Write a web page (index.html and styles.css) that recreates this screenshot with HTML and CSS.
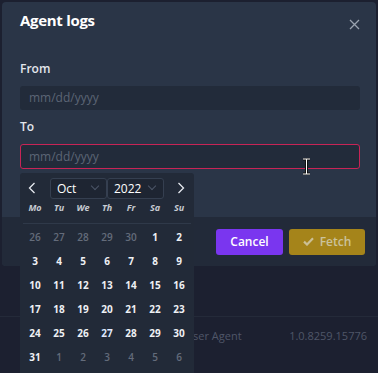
FILE: index.html
```html
<!DOCTYPE html>
<html lang="en">
<head>
    <meta charset="UTF-8">
    <meta name="viewport" content="width=device-width, initial-scale=1.0">
    <title>Agent logs</title>
    <link rel="stylesheet" href="styles.css">
</head>
<body>
    <!-- page behind the dialog -->
    <div class="page">
        <div class="info-row">
            <span class="info-key">User Agent</span>
            <span class="info-val">1.0.8259.15776</span>
        </div>
    </div>

    <!-- dialog -->
    <div class="modal">
        <div class="modal-head">
            <h2>Agent logs</h2>
            <button class="close-btn" aria-label="Close">
                <svg width="11" height="11" viewBox="0 0 11 11"><path d="M1 1L10 10M10 1L1 10" stroke="#9aa3b0" stroke-width="1.3" fill="none"/></svg>
            </button>
        </div>
        <div class="modal-body">
            <label class="field-label">From</label>
            <div class="date-input">mm/dd/yyyy</div>
            <label class="field-label">To</label>
            <div class="date-input focused">mm/dd/yyyy</div>
        </div>
        <div class="modal-foot">
            <button class="btn btn-cancel">Cancel</button>
            <button class="btn btn-fetch">
                <svg width="11" height="9" viewBox="0 0 11 9"><path d="M1 4.6L4 7.5L10 1.2" stroke="#cbbf95" stroke-width="2.2" fill="none"/></svg>
                Fetch
            </button>
        </div>
    </div>

    <!-- date picker popover -->
    <div class="picker">
        <div class="picker-head">
            <span class="nav nav-prev">
                <svg width="8" height="12" viewBox="0 0 8 12"><path d="M6.5 1L1.5 6L6.5 11" stroke="#e6e9ef" stroke-width="1.3" fill="none"/></svg>
            </span>
            <div class="sel sel-month">Oct <i class="caret"></i></div>
            <div class="sel sel-year">2022 <i class="caret"></i></div>
            <span class="nav nav-next">
                <svg width="8" height="12" viewBox="0 0 8 12"><path d="M1.5 1L6.5 6L1.5 11" stroke="#e6e9ef" stroke-width="1.3" fill="none"/></svg>
            </span>
        </div>
        <div class="week-row">
            <span>Mo</span><span>Tu</span><span>We</span><span>Th</span><span>Fr</span><span>Sa</span><span>Su</span>
        </div>
        <div class="days" id="days"></div>
    </div>

    <!-- text cursor -->
    <svg class="ibeam" width="9" height="17" viewBox="0 0 9 17">
        <path d="M1 1H8M4.5 1V16M1 16H8" stroke="#111" stroke-width="3" fill="none"/>
        <path d="M1 1H8M4.5 1V16M1 16H8" stroke="#fff" stroke-width="1" fill="none"/>
    </svg>

    <script>
        // fill the month grid
        const days = document.getElementById('days');
        const cells = [];
        [26, 27, 28, 29, 30].forEach(d => cells.push({ d, muted: true }));
        for (let d = 1; d <= 31; d++) cells.push({ d, muted: false });
        for (let d = 1; d <= 6; d++) cells.push({ d, muted: true });
        cells.forEach(c => {
            const el = document.createElement('span');
            el.className = 'day' + (c.muted ? ' muted' : '') + (!c.muted && c.d === 27 ? ' today' : '');
            el.textContent = c.d;
            days.appendChild(el);
        });
    </script>
</body>
</html>
```

FILE: styles.css
```css
/* base */
body {
    margin: 0;
    padding: 0;
    width: 378px;
    height: 373px;
    overflow: hidden;
    position: relative;
    background: #1c2030;
    font-family: 'Open Sans', 'Noto Sans', sans-serif;
    color: #e7eaf0;
}
button {
    font-family: inherit;
}

/* page behind the dialog */
.page {
    padding-top: 316px;
}
.info-row {
    display: flex;
    justify-content: space-between;
    align-items: center;
    height: 36px;
    padding: 0 11px 0 185px;
    border-top: 1px solid #242a39;
    font-size: 11px;
    color: #4f5668;
}

/* dialog */
.modal {
    position: absolute;
    left: 2px;
    top: 2px;
    width: 374px;
    height: 264px;
    display: flex;
    flex-direction: column;
    background: #2a3547;
    border-radius: 4px;
    overflow: hidden;
}
.modal-head {
    display: flex;
    justify-content: space-between;
    align-items: flex-start;
    padding: 8px 16px 0 18px;
    height: 42px;
}
.modal-head h2 {
    margin: 0;
    font-size: 15px;
    font-weight: 700;
    color: #fff;
    letter-spacing: -0.3px;
}
.close-btn {
    margin-top: 9px;
    padding: 0;
    border: none;
    background: none;
    line-height: 0;
}
.modal-body {
    flex: 1;
    padding: 9px 16px 0 18px;
}
.field-label {
    display: block;
    font-size: 12px;
    font-weight: 600;
    color: #e3e6ec;
    line-height: 16px;
    margin-bottom: 9px;
}
.date-input {
    height: 24px;
    line-height: 24px;
    padding: 0 9px;
    margin-bottom: 9px;
    background: #222b3a;
    border-radius: 3px;
    font-size: 12px;
    color: #5c6575;
}
.date-input.focused {
    height: 23px;
    line-height: 23px;
    border: 1px solid #c82456;
    padding: 0 8px;
}
.modal-foot {
    height: 49px;
    display: flex;
    justify-content: flex-end;
    align-items: center;
    gap: 6px;
    padding-right: 11px;
    background: #222a39;
}
.btn {
    height: 26px;
    border: none;
    border-radius: 3px;
    font-size: 12px;
    font-weight: 600;
    display: flex;
    align-items: center;
    justify-content: center;
    gap: 6px;
}
.btn-cancel {
    width: 67px;
    background: #7a36ef;
    color: #fff;
}
.btn-fetch {
    width: 76px;
    background: #a5841a;
    color: #cbc29c;
}

/* date picker */
.picker {
    position: absolute;
    left: 20px;
    top: 173px;
    width: 174px;
    height: 210px;
    background: #222a38;
    border-radius: 3px;
    padding: 4px 3px 0;
    box-sizing: border-box;
}
.picker-head {
    display: flex;
    align-items: center;
    height: 22px;
}
.nav {
    display: flex;
    justify-content: center;
    line-height: 0;
}
.nav-prev {
    width: 18px;
    margin-right: 9px;
}
.nav-next {
    margin-left: auto;
    width: 20px;
}
.sel {
    height: 21px;
    box-sizing: border-box;
    border: 1px solid #353f50;
    border-radius: 3px;
    background: #1e2532;
    display: flex;
    align-items: center;
    justify-content: space-between;
    padding: 0 8px 0 6px;
    font-size: 12px;
    font-weight: 500;
    color: #fff;
}
.sel-month {
    width: 57px;
}
.sel-year {
    width: 57px;
}
.caret {
    width: 5px;
    height: 5px;
    border-right: 1px solid #4c5667;
    border-bottom: 1px solid #4c5667;
    transform: rotate(45deg);
    margin-top: -4px;
}
.week-row {
    display: grid;
    grid-template-columns: repeat(7, 24px);
    height: 25px;
    line-height: 18px;
    box-sizing: border-box;
    border-bottom: 1px solid #2f3949;
    font-size: 9px;
    font-weight: 700;
    font-style: italic;
    color: #c6cad2;
    text-align: center;
}
.days {
    display: grid;
    grid-template-columns: repeat(7, 24px);
    grid-auto-rows: 24px;
    padding-top: 1px;
}
.day {
    display: flex;
    align-items: center;
    justify-content: center;
    font-size: 10px;
    font-weight: 700;
    color: #eef0f4;
}
.day.muted {
    color: #646c7b;
    font-weight: 600;
}
.day.today {
    color: #dfe8ff;
}

/* text cursor over the To field */
.ibeam {
    position: absolute;
    left: 302px;
    top: 158px;
}
```
